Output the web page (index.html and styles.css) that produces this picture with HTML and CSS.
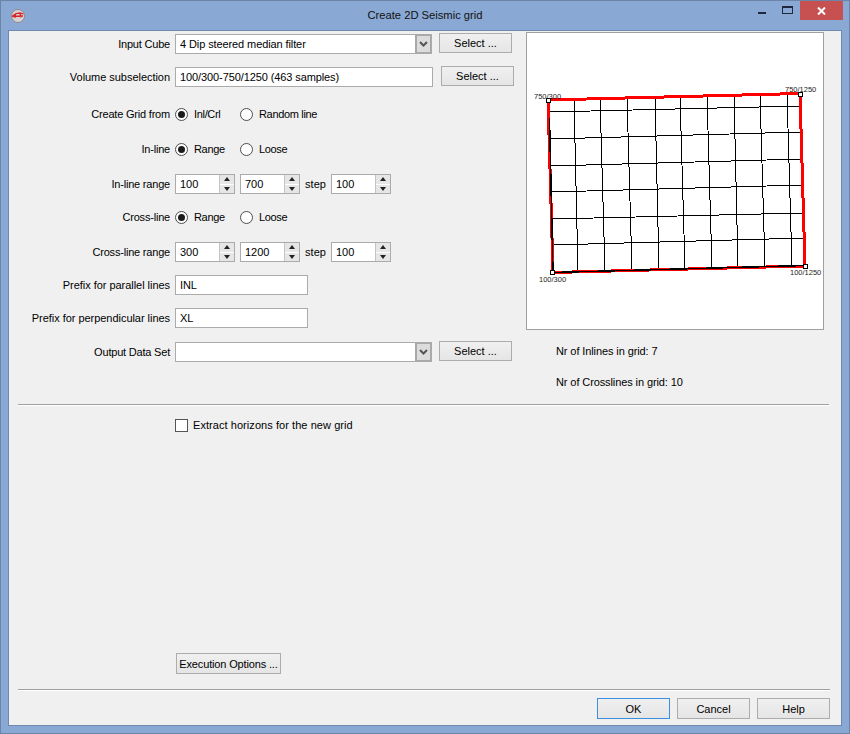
FILE: index.html
```html
<!DOCTYPE html>
<html lang="en">
<head>
<meta charset="utf-8">
<title>Create 2D Seismic grid</title>
<link rel="stylesheet" href="styles.css">
</head>
<body>
<div class="window">
  <header class="titlebar">
    <svg class="app-icon" width="16" height="16" viewBox="0 0 16 16">
      <circle cx="8" cy="8" r="6.500" fill="#d9d2d2" stroke="#8f8a8a"/>
      <path d="M2 8.500L6 5.500L10 5L13.500 6M5.500 5.500L5 10M10 5L11 9.500M2.500 8.500L13 8" fill="none" stroke="#d8242c" stroke-width="1.300"/>
    </svg>
    <h1 class="title">Create 2D Seismic grid</h1>
    <div class="caption-buttons">
      <span class="cap-min"></span>
      <span class="cap-max"></span>
      <span class="cap-close">
        <svg width="9" height="8" viewBox="0 0 9 8"><path d="M1 0.500L8 7.500M8 0.500L1 7.500" stroke="#fff" stroke-width="2"/></svg>
      </span>
    </div>
  </header>
  <main class="client">
    <section class="main-row">
      <div class="form">
        <div class="row gap-13">
          <label class="lbl">Input Cube</label>
          <div class="combo w-257"><span class="combo-text">4 Dip steered median filter</span><span class="combo-arrow"><svg width="9" height="6" viewBox="0 0 9 6"><path d="M1 1L4.500 4.500L8 1" fill="none" stroke="#555" stroke-width="2"/></svg></span></div>
          <button class="btn select-btn ml-7">Select ...</button>
        </div>
        <div class="row gap-17">
          <label class="lbl lbl-long">Volume subselection</label>
          <div class="field w-258">100/300-750/1250 (463 samples)</div>
          <button class="btn select-btn ml-8">Select ...</button>
        </div>
        <div class="row gap-15">
          <label class="lbl">Create Grid from</label>
          <span class="radio on"></span><span class="opt w-46">Inl/Crl</span>
          <span class="radio"></span><span class="opt">Random line</span>
        </div>
        <div class="row gap-15">
          <label class="lbl">In-line</label>
          <span class="radio on"></span><span class="opt w-46">Range</span>
          <span class="radio"></span><span class="opt">Loose</span>
        </div>
        <div class="row gap-13">
          <label class="lbl">In-line range</label>
          <div class="spin"><span class="spin-val">100</span><span class="spin-btns"><i class="up"></i><i class="down"></i></span></div>
          <div class="spin ml-5"><span class="spin-val">700</span><span class="spin-btns"><i class="up"></i><i class="down"></i></span></div>
          <span class="step">step</span>
          <div class="spin"><span class="spin-val">100</span><span class="spin-btns"><i class="up"></i><i class="down"></i></span></div>
        </div>
        <div class="row gap-15">
          <label class="lbl">Cross-line</label>
          <span class="radio on"></span><span class="opt w-46">Range</span>
          <span class="radio"></span><span class="opt">Loose</span>
        </div>
        <div class="row gap-13">
          <label class="lbl">Cross-line range</label>
          <div class="spin"><span class="spin-val">300</span><span class="spin-btns"><i class="up"></i><i class="down"></i></span></div>
          <div class="spin ml-5"><span class="spin-val">1200</span><span class="spin-btns"><i class="up"></i><i class="down"></i></span></div>
          <span class="step">step</span>
          <div class="spin"><span class="spin-val">100</span><span class="spin-btns"><i class="up"></i><i class="down"></i></span></div>
        </div>
        <div class="row gap-13">
          <label class="lbl lbl-long">Prefix for parallel lines</label>
          <div class="field w-133">INL</div>
        </div>
        <div class="row gap-14">
          <label class="lbl lbl-long">Prefix for perpendicular lines</label>
          <div class="field w-133">XL</div>
        </div>
        <div class="row">
          <label class="lbl">Output Data Set</label>
          <div class="combo w-257"><span class="combo-text"></span><span class="combo-arrow"><svg width="9" height="6" viewBox="0 0 9 6"><path d="M1 1L4.500 4.500L8 1" fill="none" stroke="#555" stroke-width="2"/></svg></span></div>
          <button class="btn select-btn ml-7">Select ...</button>
        </div>
      </div>
      <aside class="side">
        <div class="preview">
          <svg class="grid-svg" width="296" height="296" viewBox="527 33 296 296">
            <g class="grid-lines">
              <line x1="549" y1="112" x2="801" y2="106"/>
              <line x1="549" y1="139" x2="802" y2="132"/>
              <line x1="550" y1="166" x2="803" y2="159"/>
              <line x1="551" y1="192" x2="803" y2="185"/>
              <line x1="552" y1="219" x2="804" y2="213"/>
              <line x1="552" y1="245" x2="805" y2="238"/>
              <line x1="574" y1="99" x2="578" y2="271"/>
              <line x1="600" y1="98" x2="605" y2="270"/>
              <line x1="627" y1="97" x2="632" y2="270"/>
              <line x1="655" y1="97" x2="659" y2="269"/>
              <line x1="680" y1="96" x2="685" y2="268"/>
              <line x1="707" y1="95" x2="712" y2="268"/>
              <line x1="734" y1="95" x2="738" y2="267"/>
              <line x1="760" y1="94" x2="765" y2="266"/>
              <line x1="787" y1="93" x2="792" y2="266"/>
            </g>
            <g class="red-edges">
              <line x1="548" y1="100" x2="800" y2="93.500"/>
              <line x1="800" y1="94" x2="805" y2="266"/>
              <line x1="553" y1="272.500" x2="805" y2="266"/>
              <line x1="548" y1="100" x2="553" y2="272"/>
            </g>
            <g class="black-edges">
              <line x1="553" y1="272.500" x2="805" y2="265.500"/>
              <line x1="549.500" y1="118" x2="553" y2="272"/>
            </g>
            <g class="corners">
              <rect x="546.500" y="98.500" width="4" height="4"/>
              <rect x="798.500" y="92.500" width="4" height="4"/>
              <rect x="803.500" y="264.500" width="4" height="4"/>
              <rect x="550.500" y="270.500" width="4" height="4"/>
            </g>
            <g class="corner-labels">
              <text x="534" y="99">750/300</text>
              <text x="785" y="92">750/1250</text>
              <text x="539" y="282">100/300</text>
              <text x="790" y="275">100/1250</text>
            </g>
          </svg>
        </div>
        <p class="info info-first">Nr of Inlines in grid: 7</p>
        <p class="info info-second">Nr of Crosslines in grid: 10</p>
      </aside>
    </section>
    <hr class="sep sep-top">
    <div class="check-row">
      <span class="checkbox"></span><span class="check-label">Extract horizons for the new grid</span>
    </div>
    <div class="spacer"></div>
    <div class="exec-row"><button class="btn exec-btn">Execution Options ...</button></div>
    <hr class="sep sep-bottom">
    <footer class="footer">
      <button class="btn foot-btn default">OK</button>
      <button class="btn foot-btn">Cancel</button>
      <button class="btn foot-btn">Help</button>
    </footer>
  </main>
</div>
</body>
</html>
```
FILE: styles.css
```css
* { box-sizing: border-box; }
html, body { margin: 0; padding: 0; }
body {
  width: 850px;
  height: 734px;
  overflow: hidden;
  font-family: "Liberation Sans", Arial, sans-serif;
  font-size: 11px;
  color: #000;
}
.window {
  width: 850px;
  height: 734px;
  display: flex;
  flex-direction: column;
  background: #8aa8d4;
  border: 1px solid #6b84a8;
}
.titlebar {
  height: 29px;
  flex: none;
  display: flex;
  align-items: flex-start;
  position: relative;
}
.app-icon { position: absolute; left: 9px; top: 7px; }
.title {
  margin: 0;
  width: 100%;
  text-align: center;
  font-size: 11.200px;
  font-weight: 400;
  line-height: 28px;
  color: #111;
}
.caption-buttons { position: absolute; right: 6px; top: 0; width: 85px; height: 20px; }
.cap-min { position: absolute; left: 0; top: 11px; width: 8px; height: 2px; background: #1e2a3c; }
.cap-max { position: absolute; left: 24px; top: 5px; width: 11px; height: 8px; border: 1px solid #1e2a3c; border-top-width: 2px; }
.cap-close {
  position: absolute;
  right: 0;
  top: 0;
  width: 43px;
  height: 19px;
  background: #c75050;
  display: flex;
  align-items: center;
  justify-content: center;
}
.client {
  flex: 1;
  margin: 0 7px 7px 7px;
  background: #f0f0f0;
  border: 1px solid #6e88b0;
  display: flex;
  flex-direction: column;
  min-height: 0;
}
.main-row { display: flex; height: 367px; flex: none; }
.form { width: 516px; padding-top: 3px; flex: none; }
.row { display: flex; align-items: center; height: 20px; }
.gap-13 { margin-bottom: 13px; }
.gap-14 { margin-bottom: 14px; }
.gap-15 { margin-bottom: 15px; }
.gap-17 { margin-bottom: 17px; }
.lbl { width: 161px; text-align: right; margin-right: 5px; flex: none; white-space: nowrap; letter-spacing: -0.2px; }
.lbl-long { letter-spacing: -0.04px; }
.field {
  height: 20px;
  background: #fff;
  border: 1px solid #ababab;
  padding-left: 4px;
  line-height: 18px;
  flex: none;
  letter-spacing: -0.1px;
}
.w-258 { width: 258px; }
.w-133 { width: 133px; }
.combo {
  height: 20px;
  background: #fff;
  border: 1px solid #ababab;
  display: flex;
  flex: none;
  line-height: 18px;
}
.w-257 { width: 257px; }
.combo-text { flex: 1; padding-left: 4px; letter-spacing: -0.1px; }
.combo-arrow {
  width: 16px;
  background: #dcdcdc;
  border: 1px solid #a8a8a8;
  border-left-width: 2px;
  display: flex;
  align-items: center;
  justify-content: center;
}
.btn {
  font: inherit;
  color: #000;
  height: 20px;
  padding: 0;
  background: linear-gradient(#f0f0f0, #e5e5e5);
  border: 1px solid #acacac;
  border-radius: 0;
  flex: none;
}
.select-btn { width: 73px; margin-bottom: 2px; }
.ml-7 { margin-left: 7px; }
.ml-8 { margin-left: 8px; }
.ml-5 { margin-left: 5px; }
.radio {
  width: 13px;
  height: 13px;
  border-radius: 50%;
  background: #fff;
  border: 1px solid #4d4d4d;
  flex: none;
  display: flex;
  align-items: center;
  justify-content: center;
}
.radio.on::after {
  content: "";
  width: 7px;
  height: 7px;
  border-radius: 50%;
  background: #1a1a1a;
}
.opt { margin-left: 6px; white-space: nowrap; letter-spacing: -0.33px; }
.w-46 { width: 46px; flex: none; }
.spin {
  width: 60px;
  height: 20px;
  background: #fff;
  border: 1px solid #ababab;
  display: flex;
  flex: none;
  line-height: 18px;
}
.spin-val { flex: 1; padding-left: 4px; }
.spin-btns {
  width: 15px;
  display: flex;
  flex-direction: column;
  background: #e6e6e6;
  border-left: 1px solid #c4c4c4;
}
.spin-btns i {
  flex: 1;
  display: flex;
  align-items: center;
  justify-content: center;
}
.spin-btns .up { border-bottom: 1px solid #fff; }
.spin-btns i::after { content: ""; width: 0; height: 0; border-left: 3.500px solid transparent; border-right: 3.500px solid transparent; }
.spin-btns .up::after { border-bottom: 4px solid #222; }
.spin-btns .down::after { border-top: 4px solid #222; }
.step { width: 31px; text-align: center; flex: none; }
.side { width: 298px; margin-left: 1px; flex: none; margin-top: 1px; }
.preview {
  width: 298px;
  height: 298px;
  background: #fff;
  border: 1px solid #a0a0a0;
}
.grid-svg { display: block; }
.grid-lines line { stroke: #000; stroke-width: 1; shape-rendering: crispEdges; }
.red-edges line { stroke: #f00; stroke-width: 3; shape-rendering: crispEdges; }
.black-edges line { stroke: #000; stroke-width: 1.500; shape-rendering: crispEdges; }
.corners rect { fill: #fff; stroke: #000; stroke-width: 1; shape-rendering: crispEdges; }
.corner-labels text { font-family: "Liberation Sans", Arial, sans-serif; font-size: 7.500px; fill: #222; }
.info { margin: 0 0 0 30px; line-height: 14px; letter-spacing: -0.1px; }
.info-first { margin-top: 14px; }
.info-second { margin-top: 17px; }
.sep {
  margin: 0;
  border: 0;
  height: 2px;
  flex: none;
  border-top: 1px solid #a0a0a0;
  border-bottom: 1px solid #fff;
}
.sep-top { margin: 6px 12px 0 9px; }
.check-row { display: flex; align-items: center; margin: 12px 0 0 166px; height: 14px; flex: none; }
.checkbox { width: 13px; height: 13px; background: #fff; border: 1px solid #555; flex: none; }
.check-label { margin-left: 5px; white-space: nowrap; letter-spacing: 0.06px; }
.spacer { flex: 1; }
.exec-row { padding-left: 167px; flex: none; }
.exec-btn { width: 105px; height: 21px; display: block; letter-spacing: -0.15px; }
.sep-bottom { margin: 15px 11px 0 9px; }
.footer {
  flex: none;
  display: flex;
  justify-content: flex-end;
  gap: 7px;
  padding: 7px 11px 6px 0;
}
.foot-btn { width: 73px; height: 21px; }
.foot-btn.default { border-color: #3c8fe0; }
```
